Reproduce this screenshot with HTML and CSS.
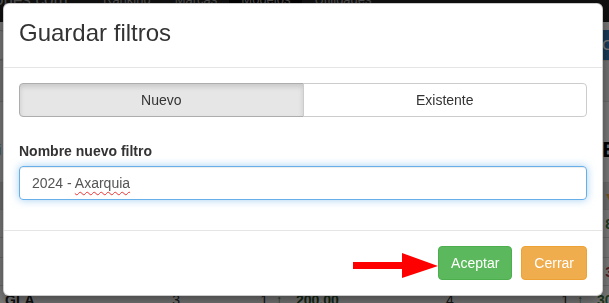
FILE: index.html
```html
<!DOCTYPE html>
<html lang="es">
<head>
  <meta charset="UTF-8">
  <title>Guardar filtros</title>
  <link rel="stylesheet" href="styles.css">
</head>
<body>
<div class="page">
  <div class="navbar">
    <div class="nav-inner">
      <span class="brand">ones.com</span>
      <span class="nav-link">Ranking</span>
      <span class="nav-link">Marcas</span>
      <span class="nav-link active">Modelos</span>
      <span class="nav-link">Utilidades</span>
    </div>
  </div>
  <div class="toolbar">
    <span class="tool-box"></span>
    <span class="tool-btn">Crear</span>
  </div>
  <div class="row row-shade"></div>
  <div class="row thin"></div>
  <div class="row heading"><span class="cut-left">ci</span><span class="big">E</span></div>
  <div class="row head-row"><span></span><span class="caret">&#9662;</span></div>
  <div class="row data"><span class="cut-left">I</span><span class="num-green">8</span></div>
  <div class="row data short"></div>
  <div class="row data"><span></span><span class="num-red">3</span></div>
  <div class="row last">
    <span class="c-name">GLA</span>
    <span class="c-r">3</span>
    <span class="c-r">1</span>
    <span class="c-up">&uarr;</span>
    <span class="c-money">200.00</span>
    <span class="c-c">4</span>
    <span class="c-r">1</span>
    <span class="c-up">&uarr;</span>
    <span class="c-total">30</span>
  </div>
</div>

<div class="backdrop"></div>

<div class="modal">
  <div class="modal-header">
    <h4 class="modal-title">Guardar filtros</h4>
  </div>
  <div class="modal-body">
    <div class="btn-group">
      <span class="seg active">Nuevo</span>
      <span class="seg">Existente</span>
    </div>
    <div class="form-group">
      <label class="label">Nombre nuevo filtro</label>
      <div class="field">2024 - <span class="misspelled">Axarquia</span></div>
    </div>
  </div>
  <div class="modal-footer">
    <svg class="arrow" width="86" height="26" viewBox="0 0 86 26">
      <rect x="0" y="9" width="52" height="7" fill="#ff0000"/>
      <polygon points="49,0 85,13 49,25" fill="#ff0000"/>
    </svg>
    <span class="btn btn-success">Aceptar</span>
    <span class="btn btn-warning">Cerrar</span>
  </div>
</div>
</body>
</html>
```

FILE: styles.css
```css
body {
  margin: 0;
  height: 303px;
  overflow: hidden;
  font-family: "Liberation Sans", Arial, sans-serif;
  font-size: 14px;
  color: #333;
  background: #fff;
}

/* page behind the dialog */
.page {
  height: 303px;
  overflow: hidden;
}
.navbar {
  height: 22px;
  background: #222;
  overflow: hidden;
}
.nav-inner {
  display: flex;
  align-items: center;
  height: 22px;
  margin-top: -11px;
  color: #9d9d9d;
  font-size: 13px;
}
.brand {
  font-size: 17px;
  margin-left: -6px;
  width: 97px;
}
.nav-link {
  padding: 0 12px;
  line-height: 22px;
}
.nav-link.active {
  background: #080808;
}
.toolbar {
  display: flex;
  justify-content: space-between;
  margin-top: 8px;
  height: 30px;
}
.tool-box {
  width: 20px;
  margin-left: -17px;
  border: 1px solid #ccc;
  border-radius: 4px;
  background: #fff;
}
.tool-btn {
  width: 40px;
  margin-right: -37px;
  padding: 6px 4px;
  color: #fff;
  background: #337ab7;
  border-radius: 4px;
  font-size: 15px;
}
.row {
  display: flex;
  justify-content: space-between;
  border-top: 1px solid #ddd;
}
.row-shade {
  height: 40px;
  background: #f2f2f2;
}
.thin {
  height: 24px;
}
.heading {
  height: 48px;
  border-top: none;
  align-items: center;
}
.cut-left {
  margin-left: -9px;
}
.big {
  font-size: 22px;
  font-weight: bold;
  color: #000;
  margin-right: -8px;
}
.head-row {
  margin-top: 8px;
  height: 26px;
  background: #e3e3e3;
  align-items: center;
}
.caret {
  color: #f0ad4e;
  margin-right: -4px;
}
.data {
  height: 27px;
  align-items: center;
}
.data.short { height: 19px; }
.num-green {
  font-weight: bold;
  color: #3c763d;
  margin-right: -4px;
}
.num-red {
  font-weight: bold;
  color: #a94442;
  margin-right: -4px;
}
.last {
  display: grid;
  grid-template-columns: 160px 20px 88px 22px 130px 60px 89px 23px 60px;
  height: 30px;
  padding-top: 6px;
  line-height: 16px;
}
.c-name { padding-left: 5px; font-weight: bold; color: #222; }
.c-r { text-align: right; }
.c-c { text-align: center; }
.c-up { padding-left: 8px; color: #3c763d; font-size: 12px; }
.c-money { padding-left: 6px; font-weight: bold; color: #2b542c; }
.c-total { padding-left: 5px; font-weight: bold; color: #3c763d; }

.backdrop {
  position: fixed;
  top: 0;
  left: 0;
  right: 0;
  bottom: 0;
  background: rgba(0, 0, 0, 0.5);
}

/* dialog */
.modal {
  position: fixed;
  top: 3px;
  left: 3px;
  width: 600px;
  box-sizing: border-box;
  background: #fff;
  border: 1px solid rgba(0, 0, 0, 0.2);
  border-radius: 6px;
  box-shadow: 0 5px 15px rgba(0, 0, 0, 0.5);
}
.modal-header {
  padding: 16px 15px 21px;
  border-bottom: 1px solid #e5e5e5;
}
.modal-title {
  margin: 0;
  font-size: 24px;
  line-height: 26px;
  font-weight: normal;
  color: #333;
}
.modal-body {
  padding: 15px;
}
.btn-group {
  display: flex;
  margin-bottom: 24px;
}
.seg {
  flex: 1;
  text-align: center;
  padding: 6px 12px;
  line-height: 20px;
  border: 1px solid #ccc;
  background: #fff;
  color: #333;
}
.seg:first-child {
  border-radius: 4px 0 0 4px;
}
.seg:last-child {
  border-radius: 0 4px 4px 0;
  margin-left: -1px;
}
.seg.active {
  background: #e6e6e6;
  border-color: #adadad;
  box-shadow: inset 0 3px 5px rgba(0, 0, 0, 0.125);
}
.form-group {
  margin-bottom: 15px;
}
.label {
  display: block;
  font-weight: bold;
  line-height: 20px;
  margin-bottom: 5px;
}
.field {
  height: 34px;
  box-sizing: border-box;
  padding: 6px 12px;
  line-height: 20px;
  color: #555;
  border: 1px solid #66afe9;
  border-radius: 4px;
  box-shadow: inset 0 1px 1px rgba(0, 0, 0, 0.075), 0 0 8px rgba(102, 175, 233, 0.6);
}
.misspelled {
  text-decoration: underline wavy #e33;
  text-decoration-thickness: 1px;
  text-underline-offset: 3px;
}
.modal-footer {
  position: relative;
  display: flex;
  justify-content: flex-end;
  gap: 9px;
  padding: 15px;
  border-top: 1px solid #e5e5e5;
}
.arrow {
  position: absolute;
  left: 349px;
  top: 22px;
}
.btn {
  padding: 6px 12px;
  line-height: 20px;
  font-size: 14px;
  color: #fff;
  border: 1px solid;
  border-radius: 4px;
}
.btn-success {
  background: #5cb85c;
  border-color: #4cae4c;
}
.btn-warning {
  background: #f0ad4e;
  border-color: #eea236;
}
```
